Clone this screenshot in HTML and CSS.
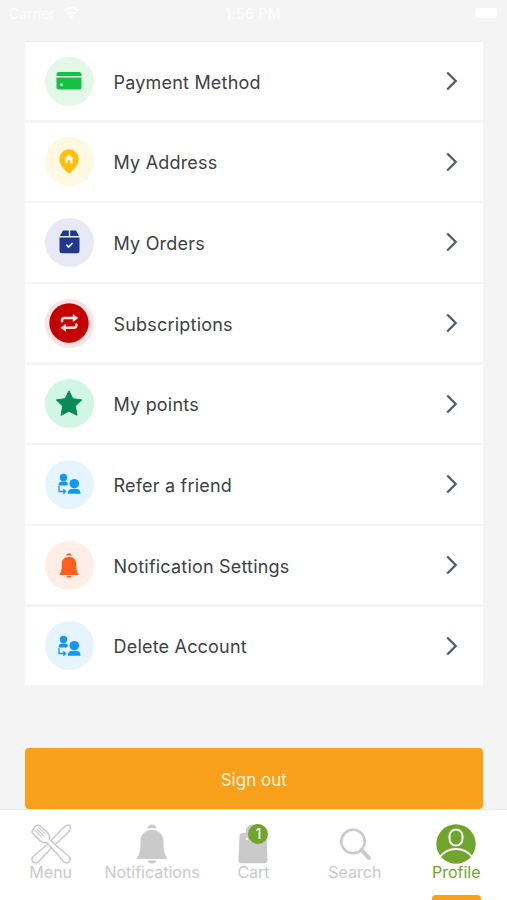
FILE: index.html
```
<!DOCTYPE html>
<html lang="en">

<head>
    <meta charset="UTF-8">
    <meta name="viewport" content="width=device-width, initial-scale=1.0">
    <title>Profile</title>
    <link rel="stylesheet" href="styles.css">
</head>

<body>
    <svg class="defs" width="0" height="0">
        <symbol id="chevron" viewBox="0 0 12 20">
            <path d="M1.200 1.500 9.700 10l-8.500 8.500" fill="none" stroke="#4b6066" stroke-width="2.300"/>
        </symbol>
        <symbol id="friends" viewBox="0 0 24 24">
            <circle cx="6.500" cy="5.500" r="3.700"/>
            <path d="M1.500 13.500c0-3 1.500-4 3.500-4h3c1.500 0 2.600.7 3 2l-1 2z"/>
            <circle cx="17.300" cy="11.700" r="4.800"/>
            <path d="M10.800 21.800c0-3.300 1.500-4.800 4-4.800h5c2.500 0 3.700 1.500 3.700 4.800z"/>
            <path d="M2 14v5.500h5.700M6.300 17.200l2.300 2.300-2.300 2.300" fill="none" stroke="currentColor" stroke-width="1.300"/>
        </symbol>
        <symbol id="bell" viewBox="0 0 32 40">
            <path d="M11.500 4.500C12 1.800 13.700.5 16 .5s4 1.300 4.500 4c-3-.8-6-.8-9 0z"/>
            <path d="M16 6c6.800 0 11.500 4.500 11.500 11 0 8.500.8 13.500 4 18H.5c3.200-4.500 4-9.500 4-18C4.500 10.500 9.200 6 16 6z"/>
            <path d="M11.500 36.500h9c-.7 2-2.300 3-4.500 3s-3.800-1-4.500-3z"/>
        </symbol>
    </svg>

    <div class="status">
        <span class="carrier">Carrier
            <svg width="17" height="13" viewBox="0 0 17 13"><path d="M.5 4a11.500 11.500 0 0 1 16 0l-1.700 1.800a9 9 0 0 0-12.600 0zM3.300 7a7.500 7.500 0 0 1 10.400 0L12 8.700a5 5 0 0 0-7 0zM6 9.800a3.600 3.600 0 0 1 5 0L8.500 12.500z"/></svg>
        </span>
        <span class="time">1:56 PM</span>
        <span class="battery"><i></i></span>
    </div>

    <div class="list">
        <div class="row">
            <span class="icon green">
                <svg width="26" height="18" viewBox="0 0 26 18"><path d="M3 0h20a2.500 2.500 0 0 1 2.500 2.500V4H.5V2.500A2.500 2.500 0 0 1 3 0zM.5 5.500h25v9.700a2.300 2.300 0 0 1-2.300 2.300H2.800a2.300 2.300 0 0 1-2.300-2.300z"/><circle cx="5.500" cy="12.700" r="1.400" fill="#fff"/></svg>
            </span>
            <span class="name">Payment Method</span>
            <svg class="arrow"><use href="#chevron"/></svg>
        </div>
        <div class="row">
            <span class="icon yellow">
                <svg width="20" height="25" viewBox="0 0 20 25"><path d="M10 .3a9.700 9.700 0 0 1 9.700 9.700c0 5.500-4.200 10-9.700 14.700C4.500 20 .3 15.500.3 10A9.700 9.700 0 0 1 10 .3z"/><path d="M10 5.200 14.700 9.500h-1.200v4.700h-2.300v-3H8.800v3H6.500V9.500H5.300z" fill="#fff6dc"/></svg>
            </span>
            <span class="name">My Address</span>
            <svg class="arrow"><use href="#chevron"/></svg>
        </div>
        <div class="row">
            <span class="icon navy">
                <svg width="21" height="24" viewBox="0 0 21 24"><path d="M4 .5h5.800V6H.9zM11.200.5H17L20.100 6h-8.900zM.5 7.500h20V21a2.300 2.300 0 0 1-2.300 2.300H2.800A2.300 2.300 0 0 1 .5 21z"/><path d="m7.300 14.800 2.300 2.300 4-4.200" fill="none" stroke="#fff" stroke-width="1.500"/></svg>
            </span>
            <span class="name">My Orders</span>
            <svg class="arrow"><use href="#chevron"/></svg>
        </div>
        <div class="row">
            <span class="icon red">
                <svg width="40" height="40" viewBox="0 0 40 40"><circle cx="20" cy="20" r="19.700"/><g fill="none" stroke="#ffe3e3" stroke-width="2.600" stroke-linecap="round" stroke-linejoin="round"><path d="M13 18.300v-1a2.300 2.300 0 0 1 2.300-2.300H25M27.300 21.500v1a2.300 2.300 0 0 1-2.300 2.300H15"/></g><path d="M23.800 11 29.300 15l-5.500 4zM17 20.800l-5.500 4 5.500 4z" fill="#ffe3e3"/></svg>
            </span>
            <span class="name">Subscriptions</span>
            <svg class="arrow"><use href="#chevron"/></svg>
        </div>
        <div class="row">
            <span class="icon mint">
                <svg width="28" height="28" viewBox="0 0 28 28"><path d="M14 .9 17.900 8.700l8.900 1.200-6.500 6.200 1.700 9.200L14 21.200l-8 4.100 1.700-9.200-6.500-6.200 8.900-1.200z" stroke="currentColor" stroke-width="1" stroke-linejoin="round"/></svg>
            </span>
            <span class="name">My points</span>
            <svg class="arrow"><use href="#chevron"/></svg>
        </div>
        <div class="row">
            <span class="icon blue">
                <svg width="24" height="24"><use href="#friends"/></svg>
            </span>
            <span class="name">Refer a friend</span>
            <svg class="arrow"><use href="#chevron"/></svg>
        </div>
        <div class="row">
            <span class="icon orange">
                <svg width="20" height="25"><use href="#bell"/></svg>
            </span>
            <span class="name">Notification Settings</span>
            <svg class="arrow"><use href="#chevron"/></svg>
        </div>
        <div class="row">
            <span class="icon blue">
                <svg width="24" height="24"><use href="#friends"/></svg>
            </span>
            <span class="name">Delete Account</span>
            <svg class="arrow"><use href="#chevron"/></svg>
        </div>
    </div>

    <button class="signout">Sign out</button>

    <div class="tabs">
        <div class="tab">
            <svg width="40" height="40" viewBox="0 0 40 40">
                <g fill="#fff" stroke="#cacaca" stroke-width="1.500" stroke-linejoin="round">
                    <path d="M18 19 30.500 5.500C33.500 2.300 36.500.300 38.600 1.200c1.800 1.500.800 5.300-2.600 8.300L22.500 22 7.500 37.500c-1.600 1.600-4 1.800-5.500.400s-1.400-3.800.300-5.400z"/>
                    <path d="M1 8.500C.8 7 3 3.500 4.700 2.200 6 1.300 7.500 1 8.500 1.500l8 7c2 2 2.300 4.500 2 7l19.300 17c1.700 1.600 1.800 4 .4 5.400s-3.900 1.300-5.500-.3L16 18.500c-2.800.5-5.500-.2-7.500-2.300z"/>
                    <path d="m3.800 6.200 7 7M7.200 3.200l6.500 6.500M5.500 4.700l6.800 6.800" fill="none" stroke-width="1.200"/>
                </g>
            </svg>
            <span>Menu</span>
        </div>
        <div class="tab">
            <svg width="32" height="40"><use href="#bell"/></svg>
            <span>Notifications</span>
        </div>
        <div class="tab">
            <div class="bag">
                <svg width="30" height="40" viewBox="0 0 30 40"><path d="M4.500 9H8V7c0-4 2.500-6.500 7-6.500S22 3 22 7v2h3.500a3 3 0 0 1 3 2.800l1 24.200a3 3 0 0 1-3 3.300h-23A3 3 0 0 1 .5 36l1-24.200A3 3 0 0 1 4.500 9z"/><circle cx="8.800" cy="14.800" r="1.300" fill="#fff"/></svg>
                <b class="badge">1</b>
            </div>
            <span>Cart</span>
        </div>
        <div class="tab">
            <svg width="34" height="40" viewBox="0 0 34 40"><g fill="none" stroke="#cacaca"><circle cx="15" cy="17.500" r="11.700" stroke-width="2.500"/><path d="m23.500 26 7.500 8" stroke-width="4" stroke-linecap="round"/></g></svg>
            <span>Search</span>
        </div>
        <div class="tab active">
            <svg width="40" height="40" viewBox="0 0 40 40"><circle cx="20" cy="20" r="19.700"/><g fill="none" stroke="#fff" stroke-width="2"><rect x="13.500" y="5.500" width="13" height="16" rx="6.500"/><path d="M3.500 33.500C7.500 28 13 25 20 25s12.500 3 16.500 8.500"/></g></svg>
            <span>Profile</span>
        </div>
    </div>
</body>

</html>
```
FILE: styles.css
```
* {
    box-sizing: border-box;
}

body {
    margin: 0;
    height: 900px;
    display: flex;
    flex-direction: column;
    overflow: hidden;
    background: #f4f4f4;
    font-family: Inter, "Liberation Sans", sans-serif;
    color: #3e4143;
}

svg {
    display: block;
    flex: none;
    fill: currentColor;
}

.defs {
    position: absolute;
}

.status {
    height: 42px;
    flex: none;
    padding: 5px 10px 0 9px;
    display: grid;
    grid-template-columns: 1fr auto 1fr;
    align-items: start;
    font-size: 14px;
    line-height: 18px;
    color: #fcfcfc;
}

.carrier {
    display: flex;
    gap: 8px;
}

.carrier svg {
    margin-top: 1px;
}

.time {
    font-weight: 500;
    letter-spacing: .4px;
}

.battery {
    justify-self: end;
    padding-top: 3px;
}

.battery i {
    display: block;
    width: 22px;
    height: 10px;
    border-radius: 3px;
    background: #fff;
}

.list {
    margin: -1px 24.500px 0 25px;
    flex: none;
    border-top: 1px solid #eee;
}

.row {
    height: 78.350px;
    margin-bottom: 2.320px;
    padding: 0 25px 0 20px;
    display: flex;
    align-items: center;
    background: #fff;
}

.row:last-child {
    margin-bottom: 0;
}

.icon {
    width: 49px;
    height: 49px;
    padding-right: 1px;
    border-radius: 50%;
    display: flex;
    align-items: center;
    justify-content: center;
}

.green {
    background: #e4f8e9;
    color: #14c142;
}

.yellow {
    background: #fff8e2;
    color: #ffbf0b;
}

.navy {
    background: #e7eaf4;
    color: #21378c;
}

.red {
    background: #fbe2e5;
    color: #c40000;
}

.mint {
    background: #d1f5e6;
    color: #078a58;
}

.blue {
    background: #e6f4ff;
    color: #0c98ff;
}

.orange {
    background: #ffeee8;
    color: #ff5f1c;
}

.name {
    flex: 1;
    padding: 2px 0 0 19.500px;
    font-size: 18px;
    letter-spacing: .2px;
}

.arrow {
    width: 12px;
    height: 20px;
}

.signout {
    flex: none;
    height: 61px;
    margin: 63px 24.500px 0 25px;
    padding: 3px 0 0;
    border: 0;
    border-radius: 4px;
    background: #f9a01b;
    color: #fff3d6;
    font: 17px Inter, "Liberation Sans", sans-serif;
    letter-spacing: 0;
}

.tabs {
    flex: none;
    height: 91px;
    margin-top: auto;
    padding-top: 14px;
    display: grid;
    grid-template-columns: repeat(5, 1fr);
    border-top: 1px solid #ebebeb;
    background: #fff;
    color: #cacaca;
}

.tab {
    display: flex;
    flex-direction: column;
    align-items: center;
    font-size: 16px;
    line-height: 17px;
    letter-spacing: 0;
}

.bag {
    position: relative;
}

.badge {
    position: absolute;
    top: 0;
    left: 10px;
    width: 20px;
    height: 20px;
    border-radius: 50%;
    background: #6fa52c;
    color: #fff;
    font-size: 14px;
    font-weight: 500;
    line-height: 20px;
    text-align: center;
}

.active {
    color: #6fa52c;
}

/* selected tab marker */
.active::after {
    content: "";
    width: 49px;
    height: 10px;
    margin-top: 14px;
    border-radius: 4px;
    background: #f9a01b;
}
```
